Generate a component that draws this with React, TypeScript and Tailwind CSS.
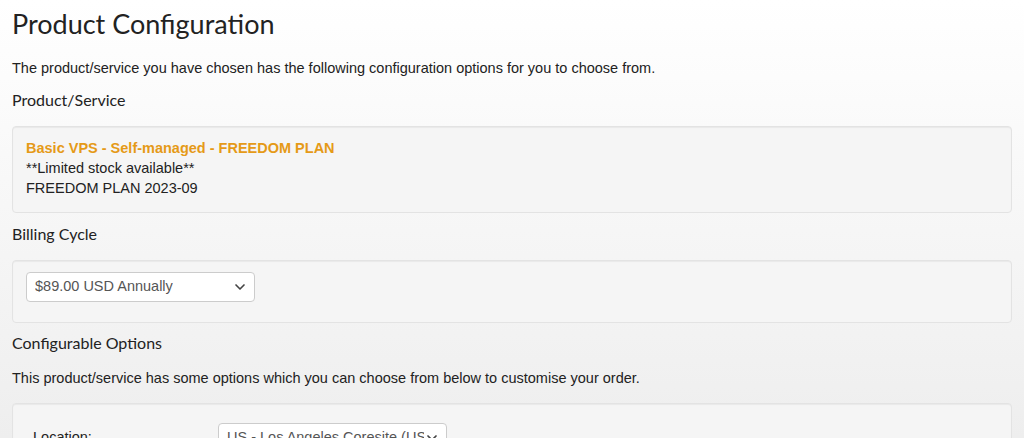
import { ChevronDown } from 'lucide-react';

const heading = "font-['Lato','Open_Sans',sans-serif] text-[#222]";
const body = "font-['Liberation_Sans',Arial,sans-serif] text-[14.5px] text-[#222]";

function Well({ children, className = '' }: { children: React.ReactNode; className?: string }) {
  return (
    <div
      className={`rounded-[4px] border border-[#e3e3e3] bg-[#f5f5f5] shadow-[inset_0_1px_1px_rgba(0,0,0,0.05)] px-[13px] ${className}`}
    >
      {children}
    </div>
  );
}

function Select({ value, width }: { value: string; width: string }) {
  return (
    <div
      className={`flex items-center justify-between h-[30px] ${width} bg-white border border-[#ccc] rounded-[4px] pl-[8px] pr-[6px] overflow-hidden`}
    >
      <span className="font-['Liberation_Sans',Arial,sans-serif] text-[14.5px] text-[#555] whitespace-nowrap overflow-hidden">
        {value}
      </span>
      <ChevronDown className="w-4 h-4 text-[#444] shrink-0" strokeWidth={2.5} />
    </div>
  );
}

export default function App() {
  return (
    <div className="h-[438px] overflow-hidden bg-gradient-to-b from-white to-[#eeeeee] px-3 pt-[4px]">
      <h1 className={`${heading} text-[27px] leading-[40px]`}>Product Configuration</h1>

      <p className={`${body} leading-[20px] mt-[14px]`}>
        The product/service you have chosen has the following configuration options for you to choose from.
      </p>

      <h2 className={`${heading} text-[16px] leading-[22px] mt-[11px]`}>Product/Service</h2>
      <Well className="mt-[15px] pt-[11px] pb-[14px]">
        <div className={`${body} leading-[20px]`}>
          <div className="font-bold text-[#e59a17]">Basic VPS - Self-managed - FREEDOM PLAN</div>
          <div>**Limited stock available**</div>
          <div>FREEDOM PLAN 2023-09</div>
        </div>
      </Well>

      <h2 className={`${heading} text-[16px] leading-[22px] mt-[10px]`}>Billing Cycle</h2>
      <Well className="mt-[15px] pt-[11px] pb-[20px]">
        <Select value="$89.00 USD Annually" width="w-[229px]" />
      </Well>

      <h2 className={`${heading} text-[16px] leading-[22px] mt-[9px]`}>Configurable Options</h2>
      <p className={`${body} leading-[20px] mt-[14px]`}>
        This product/service has some options which you can choose from below to customise your order.
      </p>

      <Well className="mt-[15px] pt-[19px] pb-[19px]">
        <div className="flex items-center">
          <label className={`${body} w-[192px] pl-[7px]`}>Location:</label>
          <Select value="US - Los Angeles Coresite (USC1)" width="w-[229px]" />
        </div>
      </Well>
    </div>
  );
}
